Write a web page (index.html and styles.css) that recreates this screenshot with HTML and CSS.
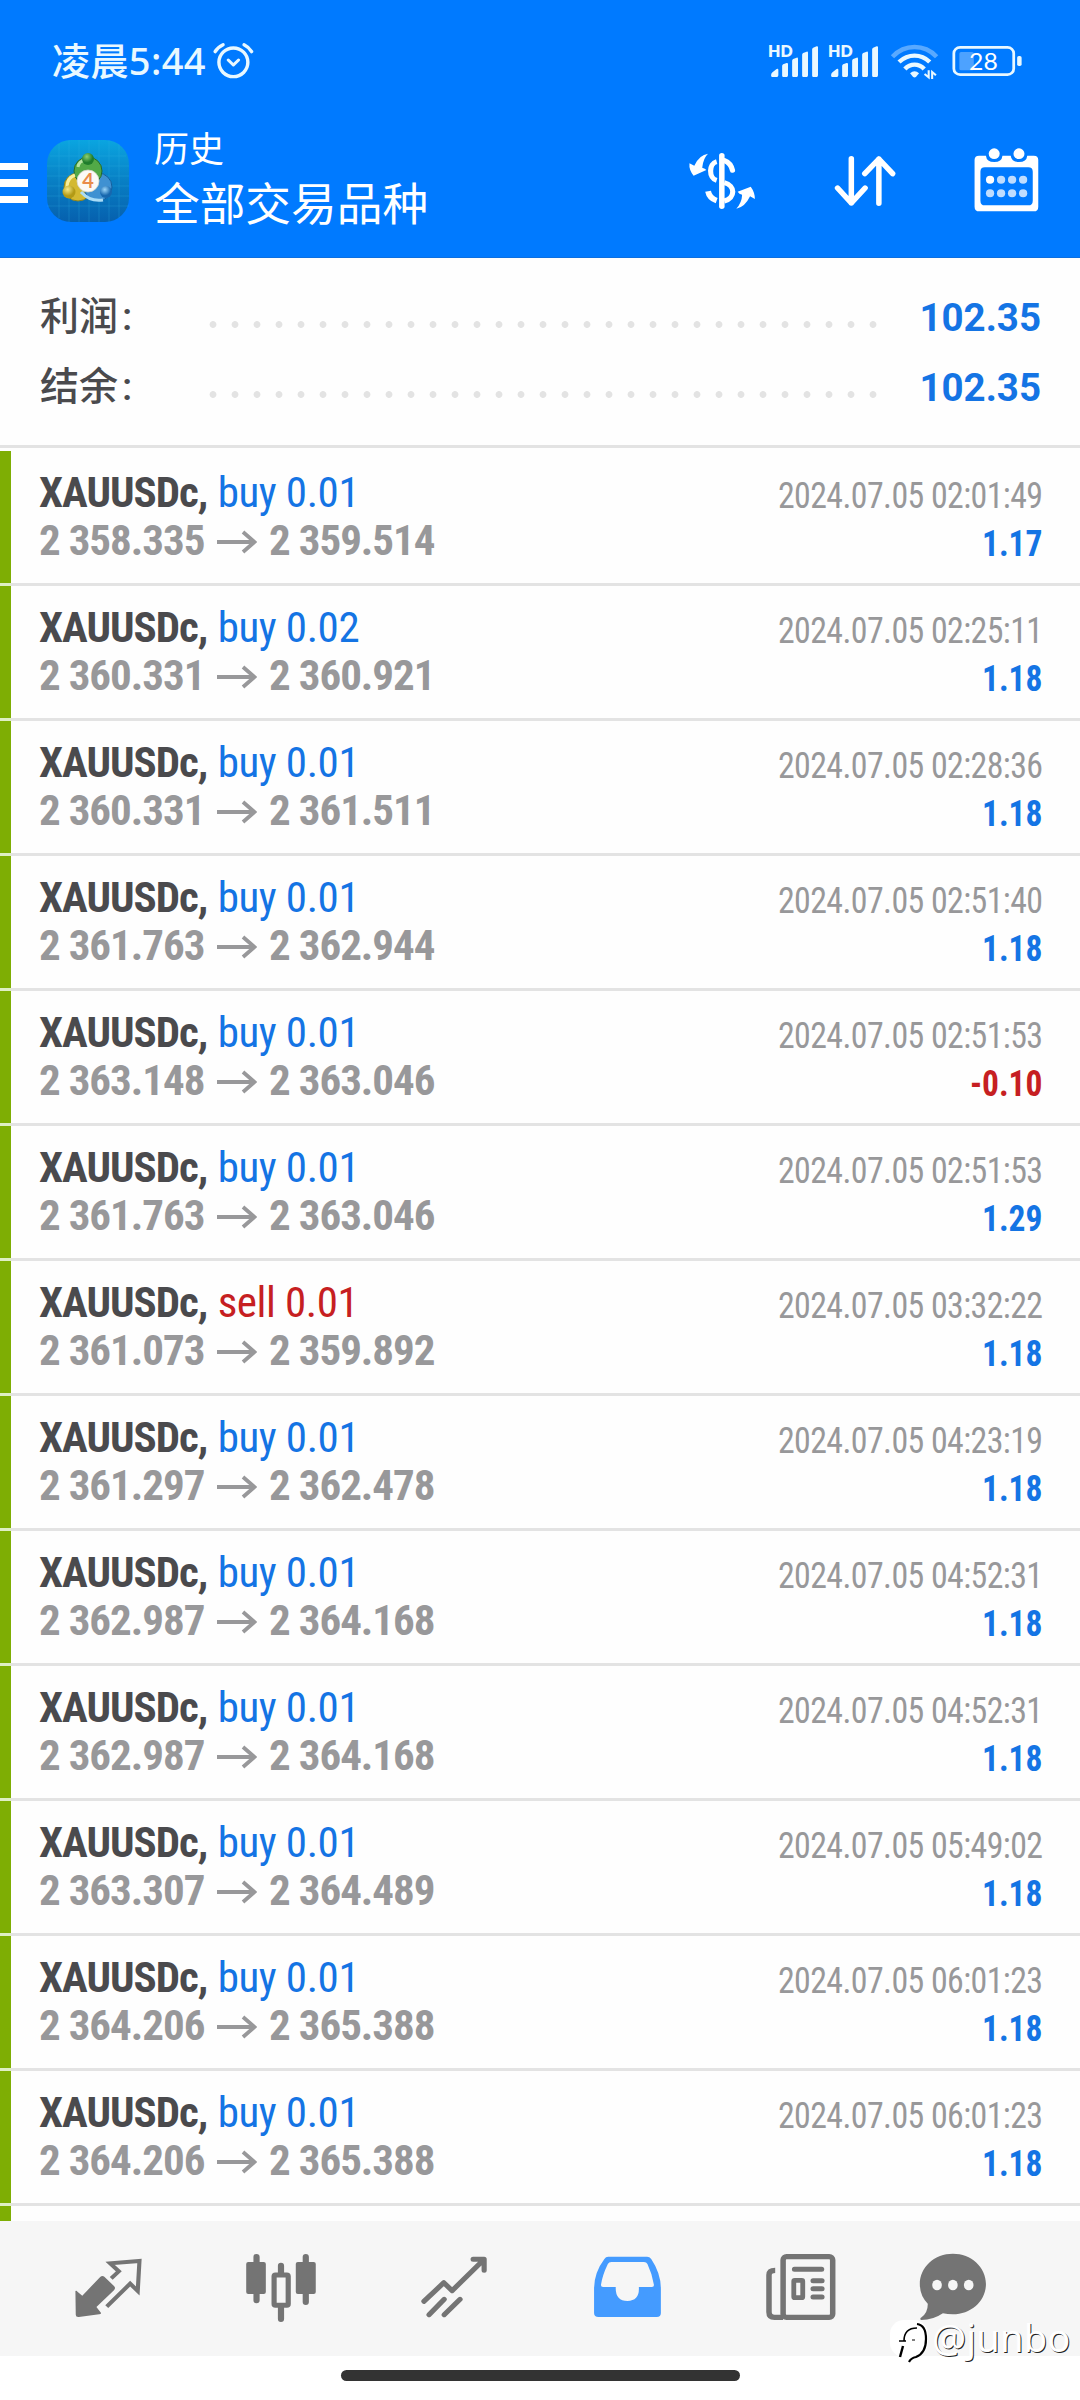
FILE: index.html
```
<!DOCTYPE html>
<html lang="zh-CN">
<head>
<meta charset="utf-8">
<title>历史</title>
<link rel="stylesheet" href="styles.css">
</head>
<body>
<svg width="0" height="0" class="defs">
  <symbol id="arrow" viewBox="0 0 40 24"><path d="M0 12H37M26 2L37.500 12L26 22" fill="none" stroke="currentColor" stroke-width="3.800"/></symbol>
  <symbol id="bars" viewBox="660 60 174 130" preserveAspectRatio="none">
    <path fill="currentColor" d="M669 165q0-4 4-8l12-10q5-2 5 3v16q0 5-4 5h-13q-4 0-4-4zM701 138q0-3 3-5l10-4q4-1 4 3v34q0 5-4 5h-9q-4 0-4-4zM730 122q0-3 3-5l10-4q4-1 4 3v50q0 5-4 5h-9q-4 0-4-4zM759 104q0-3 3-5l10-4q4-1 4 3v68q0 5-4 5h-9q-4 0-4-4zM788 88q0-3 3-5l10-4q4-1 4 3v84q0 5-4 5h-9q-4 0-4-4z"/>
  </symbol>
</svg>
<div class="phone">
  <header class="header">
    <div class="status">
      <span class="time">凌晨5:44</span>
      <svg class="alarm" viewBox="610 60 135 125" preserveAspectRatio="none" fill="none" stroke="currentColor" stroke-linecap="round" stroke-linejoin="round"><ellipse cx="675" cy="127" rx="42" ry="43" stroke-width="10"/><path d="M660 120L675 135L690 120" stroke-width="9"/><path d="M622 95Q630 81 645 74M706 74Q720 81 728 95" stroke-width="10"/></svg>
      <div class="status-icons">
        <div class="sig"><svg><use href="#bars"/></svg><span class="hd">HD</span></div>
        <div class="sig"><svg><use href="#bars"/></svg><span class="hd">HD</span></div>
        <svg class="sig" viewBox="1009 60 174 130" preserveAspectRatio="none" fill="none" stroke="currentColor" stroke-width="13">
          <path d="M1022 110Q1049 81 1086 81T1150 110" opacity=".38"/>
          <path d="M1041 126Q1061 107 1086 107T1130 126"/>
          <path d="M1058 147Q1070 134 1086 134T1114 147"/>
          <path d="M1073 160Q1086 148 1099 160L1090 171Q1086 174 1082 171Z" fill="currentColor" stroke="none"/>
          <path d="M1127 151V172L1115 162M1137 177V156L1148 166" stroke-width="6"/>
        </svg>
        <svg class="bat" viewBox="1183 60 218 130" preserveAspectRatio="none">
          <rect x="1216" y="96" width="42" height="55" rx="5" fill="#fff" opacity=".3"/>
          <rect x="1200" y="82" width="174" height="82" rx="18" fill="none" stroke="currentColor" stroke-width="8"/>
          <rect x="1384" y="108" width="13" height="30" rx="5" fill="currentColor"/>
          <text x="1286" y="149" class="pct" text-anchor="middle">28</text>
        </svg>
      </div>
    </div>
    <div class="appbar">
      <div class="burger"><i></i><i></i><i></i></div>
      <svg class="logo" viewBox="0 0 82 82">
        <defs>
          <linearGradient id="bg" x1="0" y1="0" x2="0" y2="1"><stop offset="0" stop-color="#0aa5e0"/><stop offset=".5" stop-color="#087fc4"/><stop offset="1" stop-color="#0660ae"/></linearGradient>
          <radialGradient id="gr" cx=".4" cy=".3"><stop offset="0" stop-color="#8ccf72"/><stop offset="1" stop-color="#1f7d2c"/></radialGradient>
          <radialGradient id="ye" cx=".4" cy=".3"><stop offset="0" stop-color="#f6e987"/><stop offset="1" stop-color="#b29a16"/></radialGradient>
          <radialGradient id="bl" cx=".4" cy=".3"><stop offset="0" stop-color="#9bd6fa"/><stop offset="1" stop-color="#1767ae"/></radialGradient>
        </defs>
        <rect width="82" height="82" rx="24" fill="url(#bg)"/>
        <path d="M12 4V78M22 0V82M32 0V82M42 0V82M52 0V82M62 0V82M72 4V78M3 16H79M0 26H82M0 36H82M0 46H82M0 56H82M0 66H82" stroke="#35b9e8" stroke-width=".6" opacity=".4"/>
        <circle cx="31" cy="47" r="14" fill="#d3b931" stroke="#8d8420"/>
        <circle cx="51" cy="47" r="14" fill="#3f91d2" stroke="#14609e"/>
        <circle cx="41" cy="31" r="14" fill="#52a947" stroke="#256b2a"/>
        <path d="M31 27Q32 21 38 20" fill="none" stroke="#b7e3a2" stroke-width="3"/>
        <path d="M20 47Q20 38 28 35" fill="none" stroke="#f8ef9c" stroke-width="3"/>
        <path d="M34 52Q43 62 56 60" fill="none" stroke="#a9dcf7" stroke-width="3"/>
        <circle cx="41" cy="19" r="6" fill="url(#gr)"/><circle cx="22" cy="52" r="6.500" fill="url(#ye)"/><circle cx="59" cy="52" r="6" fill="url(#bl)"/>
        <circle cx="41" cy="41" r="11" fill="#fbfaf6" stroke="#d4d4c8" stroke-width=".8"/>
        <text x="41" y="48" class="four" text-anchor="middle">4</text>
      </svg>
      <div class="titles"><div class="t1">历史</div><div class="t2">全部交易品种</div></div>
      <div class="actions">
        <svg viewBox="397.800 345 261.400 270" preserveAspectRatio="none">
          <g fill="none" stroke="currentColor" stroke-width="15"><path d="M513 425C490 431 489 474 513 481"/><path d="M488 514Q492 535 513 542" stroke-width="17"/><path d="M536 422Q554 429 559 451" stroke-linecap="round"/><path d="M535 488C568 497 568 534 535 543"/></g>
          <path d="M528 407V559" stroke="currentColor" stroke-width="16" stroke-linecap="round"/>
          <path d="M488 401Q463 404 448 437L434 430Q432 450 446 467L483 450Q480 445 471 443Q474 414 488 401ZM570 566Q595 562 610 529L624 537Q624 517 612 500L574 515Q578 522 587 524Q586 548 570 566Z" fill="currentColor"/>
        </svg>
        <svg viewBox="813 345 261.400 270" preserveAspectRatio="none" fill="none" stroke="currentColor" stroke-width="16" stroke-linecap="round" stroke-linejoin="round"><path d="M904 416V549M864 504L904 549L944 504M984 550V417M943 461L984 417L1024 461"/></svg>
        <svg viewBox="1228.400 345 261.400 270" preserveAspectRatio="none" fill="currentColor">
          <path fill-rule="evenodd" d="M1275 407H1295Q1297 426 1319 426T1343 407H1367Q1369 426 1391 426T1415 407H1434Q1447 407 1447 420V560Q1447 574 1434 574H1276Q1262 574 1262 560V420Q1262 407 1275 407ZM1292 442Q1279 442 1279 455V542Q1279 556 1292 556H1418Q1431 556 1431 542V455Q1431 442 1418 442Z"/>
          <circle cx="1319" cy="401" r="16"/><circle cx="1391" cy="401" r="16"/>
          <circle cx="1307" cy="479" r="12"/><g opacity=".75"><circle cx="1339" cy="479" r="12"/><circle cx="1371" cy="479" r="12"/><circle cx="1403" cy="479" r="12"/><circle cx="1307" cy="520" r="12"/><circle cx="1339" cy="520" r="12"/><circle cx="1371" cy="520" r="12"/><circle cx="1403" cy="520" r="12"/></g>
        </svg>
      </div>
    </div>
  </header>

  <section class="summary">
    <div class="sum"><span class="label">利润<b>:</b></span><span class="dots"></span><span class="total">102.35</span></div>
    <div class="sum"><span class="label">结余<b>:</b></span><span class="dots"></span><span class="total">102.35</span></div>
  </section>

  <main class="list">
    <div class="trade"><div class="bar"></div><div class="body"><div class="left"><div><b>XAUUSDc,</b> <span class="buy">buy 0.01</span></div><div class="price">2 358.335<svg><use href="#arrow"/></svg>2 359.514</div></div><div class="right"><div class="date">2024.07.05 02:01:49</div><div class="profit">1.17</div></div></div></div>
    <div class="trade"><div class="bar"></div><div class="body"><div class="left"><div><b>XAUUSDc,</b> <span class="buy">buy 0.02</span></div><div class="price">2 360.331<svg><use href="#arrow"/></svg>2 360.921</div></div><div class="right"><div class="date">2024.07.05 02:25:11</div><div class="profit">1.18</div></div></div></div>
    <div class="trade"><div class="bar"></div><div class="body"><div class="left"><div><b>XAUUSDc,</b> <span class="buy">buy 0.01</span></div><div class="price">2 360.331<svg><use href="#arrow"/></svg>2 361.511</div></div><div class="right"><div class="date">2024.07.05 02:28:36</div><div class="profit">1.18</div></div></div></div>
    <div class="trade"><div class="bar"></div><div class="body"><div class="left"><div><b>XAUUSDc,</b> <span class="buy">buy 0.01</span></div><div class="price">2 361.763<svg><use href="#arrow"/></svg>2 362.944</div></div><div class="right"><div class="date">2024.07.05 02:51:40</div><div class="profit">1.18</div></div></div></div>
    <div class="trade"><div class="bar"></div><div class="body"><div class="left"><div><b>XAUUSDc,</b> <span class="buy">buy 0.01</span></div><div class="price">2 363.148<svg><use href="#arrow"/></svg>2 363.046</div></div><div class="right"><div class="date">2024.07.05 02:51:53</div><div class="profit loss">-0.10</div></div></div></div>
    <div class="trade"><div class="bar"></div><div class="body"><div class="left"><div><b>XAUUSDc,</b> <span class="buy">buy 0.01</span></div><div class="price">2 361.763<svg><use href="#arrow"/></svg>2 363.046</div></div><div class="right"><div class="date">2024.07.05 02:51:53</div><div class="profit">1.29</div></div></div></div>
    <div class="trade"><div class="bar"></div><div class="body"><div class="left"><div><b>XAUUSDc,</b> <span class="sell">sell 0.01</span></div><div class="price">2 361.073<svg><use href="#arrow"/></svg>2 359.892</div></div><div class="right"><div class="date">2024.07.05 03:32:22</div><div class="profit">1.18</div></div></div></div>
    <div class="trade"><div class="bar"></div><div class="body"><div class="left"><div><b>XAUUSDc,</b> <span class="buy">buy 0.01</span></div><div class="price">2 361.297<svg><use href="#arrow"/></svg>2 362.478</div></div><div class="right"><div class="date">2024.07.05 04:23:19</div><div class="profit">1.18</div></div></div></div>
    <div class="trade"><div class="bar"></div><div class="body"><div class="left"><div><b>XAUUSDc,</b> <span class="buy">buy 0.01</span></div><div class="price">2 362.987<svg><use href="#arrow"/></svg>2 364.168</div></div><div class="right"><div class="date">2024.07.05 04:52:31</div><div class="profit">1.18</div></div></div></div>
    <div class="trade"><div class="bar"></div><div class="body"><div class="left"><div><b>XAUUSDc,</b> <span class="buy">buy 0.01</span></div><div class="price">2 362.987<svg><use href="#arrow"/></svg>2 364.168</div></div><div class="right"><div class="date">2024.07.05 04:52:31</div><div class="profit">1.18</div></div></div></div>
    <div class="trade"><div class="bar"></div><div class="body"><div class="left"><div><b>XAUUSDc,</b> <span class="buy">buy 0.01</span></div><div class="price">2 363.307<svg><use href="#arrow"/></svg>2 364.489</div></div><div class="right"><div class="date">2024.07.05 05:49:02</div><div class="profit">1.18</div></div></div></div>
    <div class="trade"><div class="bar"></div><div class="body"><div class="left"><div><b>XAUUSDc,</b> <span class="buy">buy 0.01</span></div><div class="price">2 364.206<svg><use href="#arrow"/></svg>2 365.388</div></div><div class="right"><div class="date">2024.07.05 06:01:23</div><div class="profit">1.18</div></div></div></div>
    <div class="trade"><div class="bar"></div><div class="body"><div class="left"><div><b>XAUUSDc,</b> <span class="buy">buy 0.01</span></div><div class="price">2 364.206<svg><use href="#arrow"/></svg>2 365.388</div></div><div class="right"><div class="date">2024.07.05 06:01:23</div><div class="profit">1.18</div></div></div></div>
    <div class="trade"><div class="bar"></div></div>
  </main>

  <nav class="tabs">
    <svg viewBox="63.900 123 502.400 405" preserveAspectRatio="none">
      <path d="M219 333Q222 330 225 335L239 347L291 291Q297 285 303 290L331 318Q337 324 331 331L280 381L292 397Q296 402 288 403L229 411Q220 412 220 404Z" fill="currentColor"/>
      <path d="M323 295L345 274L320 250L405 243L400 333L378 311L310 380" fill="none" stroke="currentColor" stroke-width="12"/>
    </svg>
    <svg viewBox="566.300 123 502.400 405" preserveAspectRatio="none">
      <path d="M745 231V361M888 231V366M816 257V280M816 383V417" stroke="currentColor" stroke-width="18" stroke-linecap="round"/>
      <rect x="715" y="246" width="57" height="96" rx="6" fill="currentColor"/><rect x="859" y="246" width="58" height="96" rx="6" fill="currentColor"/>
      <rect x="796" y="285" width="41" height="91" rx="4" fill="none" stroke="currentColor" stroke-width="15"/>
    </svg>
    <svg viewBox="1068.700 123 502.400 405" preserveAspectRatio="none" fill="none" stroke="currentColor" stroke-width="15" stroke-linecap="round" stroke-linejoin="round"><path d="M1231 364L1289 308L1313 332L1404 240M1374 238H1406V271M1246 404L1290 358M1290 404L1336 358"/></svg>
    <svg class="active" viewBox="2.900 123 502.400 405" preserveAspectRatio="none" fill="currentColor"><path fill-rule="evenodd" d="M198 230H311Q318 230 323 237Q351 280 351 326V399Q351 411 339 411H170Q157 411 157 399V326Q157 278 187 237Q191 230 198 230ZM207 246Q200 246 197 252Q181 286 177 315Q177 321 183 321H220Q218 362 254 363Q290 362 287 321H325Q331 321 331 315Q326 282 312 252Q309 246 302 246Z"/></svg>
    <svg viewBox="505.300 123 502.400 405" preserveAspectRatio="none">
      <g fill="none" stroke="currentColor"><rect x="706" y="230" width="144" height="182" rx="10" stroke-width="16"/><path d="M683 271Q665 271 665 285V396Q665 412 681 412H706" stroke-width="16"/><rect x="737" y="301" width="26" height="52" rx="3" stroke-width="14"/><path d="M739 268H818M793 302H819M793 326H819M793 351H819" stroke-width="15" stroke-linecap="round"/></g>
    </svg>
    <svg viewBox="1007.700 123 383.300 405" preserveAspectRatio="none">
      <path d="M1199 221C1252 221 1295 261 1295 312S1252 403 1199 403Q1183 403 1170 400Q1142 420 1107 420Q1101 417 1108 412Q1127 397 1126 371Q1103 347 1103 312C1103 261 1146 221 1199 221Z" fill="currentColor"/>
      <g fill="#f6f6f6"><ellipse cx="1153" cy="315" rx="14" ry="16"/><ellipse cx="1199" cy="315" rx="14" ry="16"/><ellipse cx="1245" cy="315" rx="14" ry="16"/></g>
    </svg>
  </nav>
  <div class="gesture"><i></i></div>
  <div class="watermark">
    <svg viewBox="0 0 44 50"><rect x="2" y="2" width="38" height="37" rx="14" fill="#fff"/><g fill="none" stroke="#000"><path d="M11 23H16Q16 10 29 10M16 23H18" stroke-width="1.600"/><path d="M15 28L12 39" stroke-width="2.400"/><path d="M29 6Q38 7 38 21T28 39Q23 40 21 44" stroke-width="2.200"/><path d="M24 22H27" stroke-width="1"/></g></svg><span>@junbo</span>
  </div>
</div>
</body>
</html>
```
FILE: styles.css
```
* { box-sizing: border-box; }
body { margin: 0; background: #fff; font-family: Roboto, "Noto Sans CJK SC", sans-serif; }
b { font-weight: 700; }
.defs { position: absolute; }
.phone { position: relative; width: 1080px; height: 2400px; overflow: hidden; background: #fefefe; }

.header { height: 258px; background: #007aff; color: #fff; border-bottom: 1px solid #0c6fe0; }
.status { display: flex; align-items: flex-start; height: 98px; padding: 38px 57px 0 52px; color: #e9f8ff; }
.time { width: 159px; font: 500 38px/44px "Noto Sans", "Noto Sans CJK SC", sans-serif; white-space: nowrap; letter-spacing: 0.4px; }
.alarm { width: 46.5px; height: 41.7px; margin-top: 2px; }
.status-icons { display: flex; margin-left: auto; margin-top: 2px; }
.sig { position: relative; width: 60px; height: 43.3px; }
.sig svg { display: block; width: 60px; height: 43.3px; }
.bat { width: 75px; height: 43.3px; }
.hd { position: absolute; left: 0; top: 1px; font: 800 16px/20px Lato, sans-serif; }
.pct { font: 400 72px Lato, sans-serif; fill: #fff; }

.appbar { display: flex; align-items: flex-start; height: 159px; padding: 28px 27px 0 0; }
.burger { display: flex; flex-direction: column; gap: 9px; width: 27.5px; padding-top: 36.7px; }
.burger i { height: 7.5px; background: #fff; }
.logo { width: 82px; height: 82px; margin: 14px 0 0 19.500px; }
.four { font: 700 20px Lato, sans-serif; fill: #e98d4a; }
.titles { margin-left: 25px; font-family: "Noto Sans CJK SC", sans-serif; }
.t1 { font-size: 35px; line-height: 44px; margin-top: -1px; }
.t2 { font-size: 45.700px; line-height: 56px; margin-top: 4px; }
.actions { display: flex; gap: 53px; margin: 9px 0 0 auto; }
.actions svg { width: 90px; height: 90px; }

.summary { height: 190px; padding-top: 24px; border-bottom: 3px solid #e3e3e3; }
.sum { display: flex; height: 70px; padding: 0 39px 0 40px; line-height: 71px; }
.label { width: 162px; margin-top: -4px; font-family: "Noto Sans CJK SC", sans-serif; font-size: 39px; font-weight: 500; color: #4a4a4d; }
.label b { font: 500 39px/60px Roboto, sans-serif; margin-left: 4px; }
.dots { width: 682px; height: 7px; margin-top: 39px; background: radial-gradient(circle at center, #e3e3e3 3px, transparent 3.8px) 0 0 / 22px 7px repeat-x; }
.total { flex: 1; text-align: right; font-size: 38.500px; font-weight: 700; color: #1474e4; }

.list { height: 1773px; padding-top: 3px; overflow: hidden; }
.trade { display: flex; height: 135px; }
.bar { width: 11px; background: #7eae04; border-bottom: 3px solid #dfefc4; }
.body { flex: 1; display: flex; justify-content: space-between; padding: 17px 37.500px 0 28px; border-bottom: 3px solid #e3e3e3; font-family: "Roboto Condensed", Roboto, sans-serif; white-space: nowrap; }
.left { font-size: 43px; line-height: 48.300px; letter-spacing: -1px; color: #4a4a4d; }
.buy, .sell { margin-left: 1.500px; letter-spacing: -0.4px; }
.buy { color: #1474e4; }
.sell { color: #c61f22; }
.price { display: flex; align-items: center; font-weight: 700; color: #98989a; }
.price svg { width: 40px; height: 24px; margin: 3px 12px 0 12.500px; }
.right { padding-top: 3.500px; line-height: 48.300px; text-align: right; }
.date { font-size: 36px; color: #98989a; letter-spacing: -0.6px; transform: scaleX(.94); transform-origin: right; }
.profit { font-size: 36px; font-weight: 700; color: #1474e4; transform: scaleX(.93); transform-origin: right; }
.profit.loss { color: #c61f22; }

.tabs { display: grid; grid-template-columns: repeat(5, 173px) 132px; height: 135px; padding-left: 22px; background: #f6f6f6; color: #747474; }
.tabs svg { width: 100%; height: 135px; }
.tabs .active { color: #449bff; }
.gesture { display: flex; justify-content: center; height: 44px; padding-top: 14px; background: #fff; }
.gesture i { width: 399px; height: 11px; border-radius: 6px; background: #333; }
.watermark { position: absolute; left: 888px; top: 2318px; display: flex; }
.watermark svg { width: 44px; height: 50px; }
.watermark span { margin: -4px 0 0 0; font: 400 38px/46px "Noto Sans", sans-serif; letter-spacing: 0.2px; color: #fff; text-shadow: 1px 1px 0 #222; }
```
